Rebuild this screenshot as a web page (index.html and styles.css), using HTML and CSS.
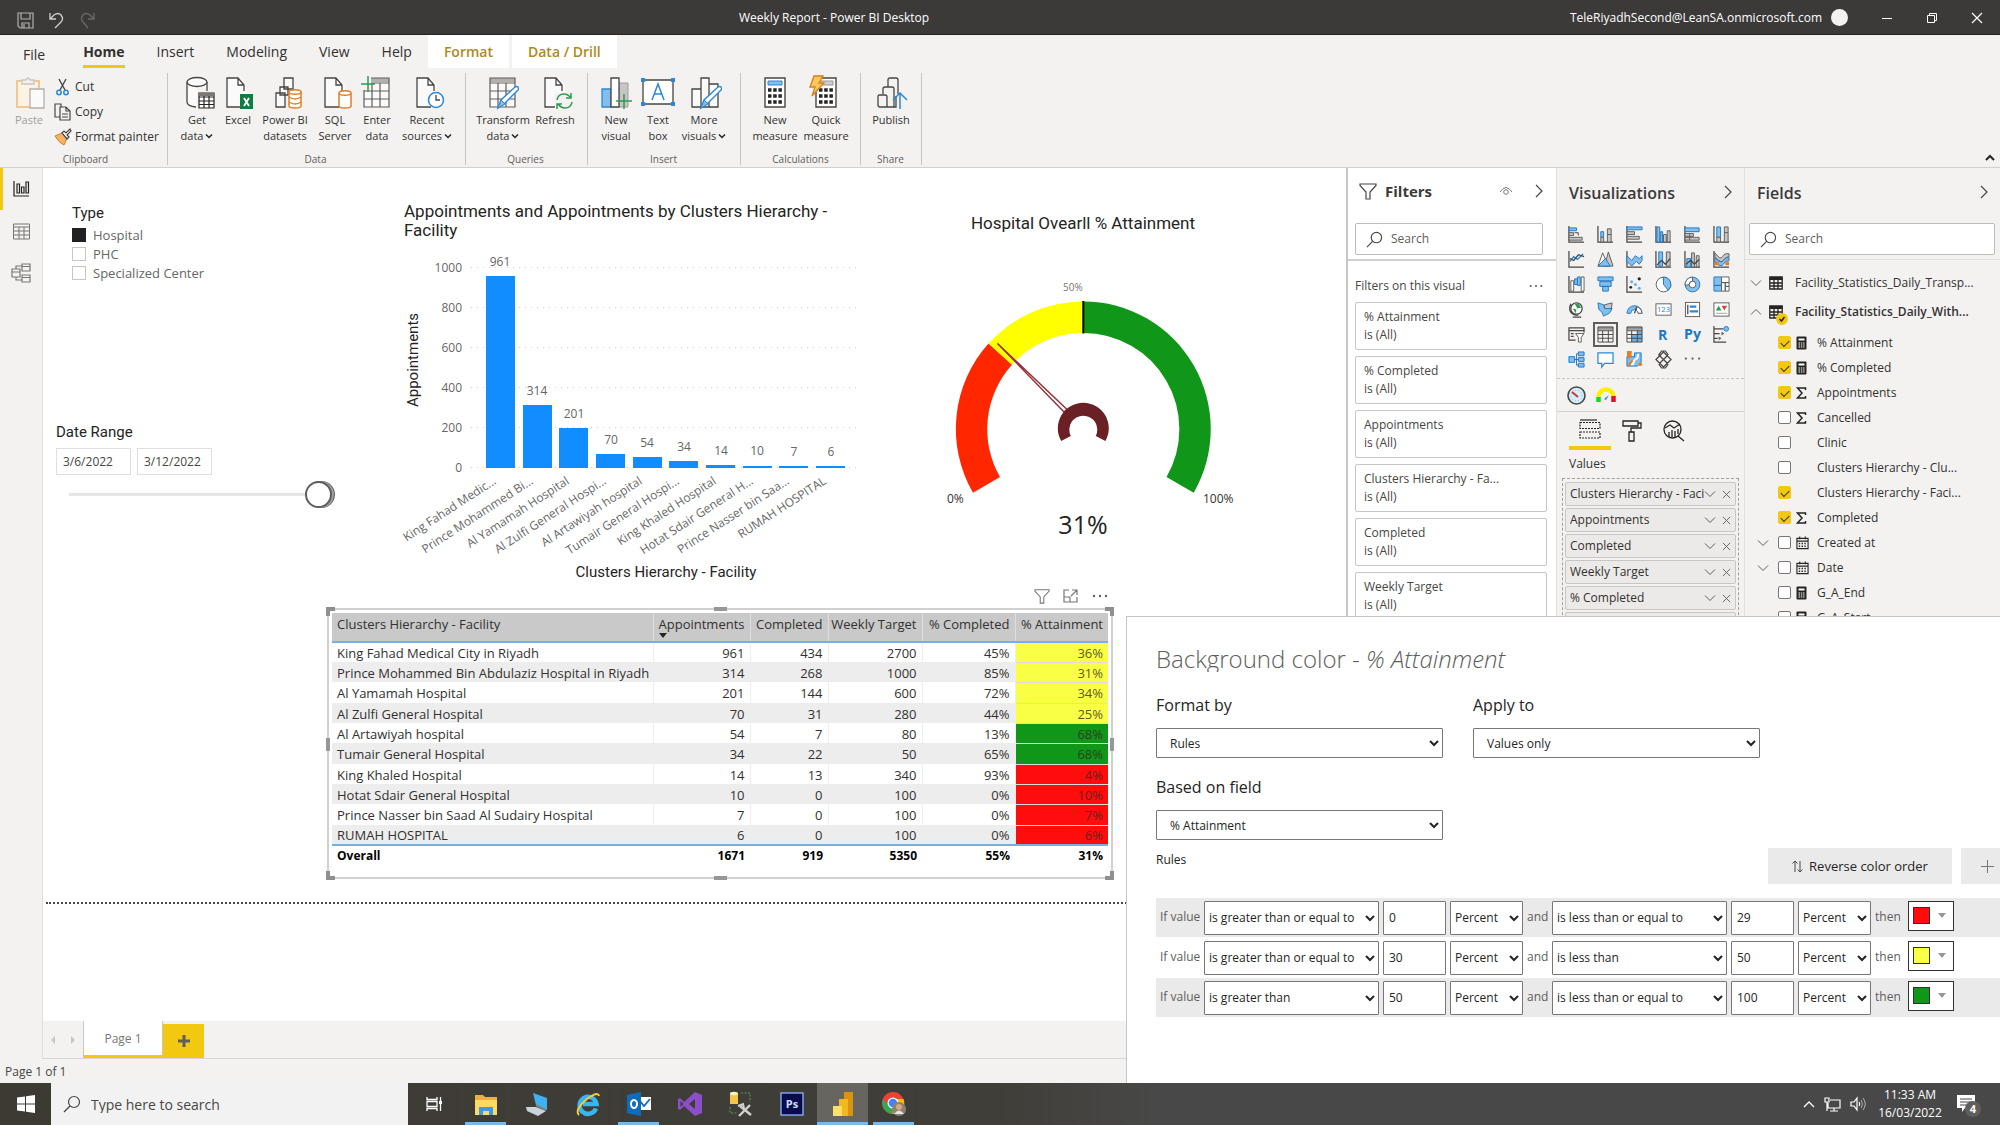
FILE: index.html
```html
<!DOCTYPE html>
<html lang="en">
<head>
<meta charset="utf-8">
<title>Weekly Report - Power BI Desktop</title>
<link rel="stylesheet" href="styles.css">
</head>
<body>
<svg class="sprite" aria-hidden="true">
  <symbol id="chev-down" viewBox="0 0 12 8"><path d="M1 1.500l5 5 5-5" fill="none" stroke="#605e5c"/></symbol>
  <symbol id="chev-up" viewBox="0 0 12 8"><path d="M1 6.500l5-5 5 5" fill="none" stroke="#605e5c"/></symbol>
  <symbol id="chev-right" viewBox="0 0 8 14"><path d="M1 1l6 6-6 6" fill="none" stroke="#484644" stroke-width="1.200"/></symbol>
  <symbol id="caret" viewBox="0 0 8 6"><path d="M1 1.500l3 3 3-3" fill="none" stroke="#252423" stroke-width="1.500"/></symbol>
  <symbol id="cross" viewBox="0 0 10 10"><path d="M1 1l8 8M9 1l-8 8" fill="none" stroke="#605e5c"/></symbol>
  <symbol id="search" viewBox="0 0 18 18"><circle cx="11" cy="7" r="5.500" fill="none" stroke="#484644" stroke-width="1.200"/><path d="M7 11l-6 6" stroke="#484644" stroke-width="1.200"/></symbol>
  <symbol id="funnel" viewBox="0 0 18 18"><path d="M1 2h16v1.500l-6 6.500v7H7v-7L1 3.500z" fill="none" stroke="currentColor" stroke-width="1.200"/></symbol>
  <symbol id="dots" viewBox="0 0 16 4"><g fill="#605e5c"><circle cx="2" cy="2" r="1.200"/><circle cx="8" cy="2" r="1.200"/><circle cx="14" cy="2" r="1.200"/></g></symbol>
  <symbol id="calc" viewBox="0 0 11 14"><rect x=".5" y=".5" width="10" height="13" rx="1" fill="#252423"/><path d="M2.500 3.500h6" stroke="#fff" stroke-width="2"/><path d="M2.500 7h6M2.500 9h6M2.500 11h6" stroke="#fff" stroke-dasharray="1.500 .8"/></symbol>
  <symbol id="sigma" viewBox="0 0 11 14"><path d="M9.500 4V2h-8l4.500 5-4.500 5h8v-2" fill="none" stroke="#252423" stroke-width="1.500"/></symbol>
  <symbol id="cal" viewBox="0 0 14 14"><path d="M1 2h12v11H1zM1 5h12M4 0v3M10 0v3" fill="none" stroke="#252423" stroke-width="1.200"/><path d="M3 7.500h8M3 10.500h8" stroke="#252423" stroke-width="1.500" stroke-dasharray="1.500 1.500"/></symbol>
  <symbol id="tbl" viewBox="0 0 14 14"><path d="M.8 1h12.400v12H.8zM1 7h12M1 10h12M5 4v9M9 4v9" fill="none" stroke="#252423" stroke-width="1.300"/><path d="M.5 1h13v3H.5z" fill="#252423"/></symbol>
  <symbol id="doc" viewBox="0 0 32 34"><path d="M4 2h14l6 7v22H4z" fill="#fafafa"/><path d="M18 31H4V2h11l6 7v6M15 2v7h6" fill="none" stroke="#484644" stroke-width="1.300"/></symbol>
  <symbol id="grid-ico" viewBox="0 0 32 34"><path d="M3 2h25v29H3z" fill="#fafafa"/><path d="M3 2h25v4H3z" fill="#b3b0ad"/><path d="M3 2h25v29H3zM3 7h25M3 15h25M3 23h25M11 7v24M19 7v24" fill="none" stroke="#605e5c" stroke-width="1.200"/></symbol>
  <symbol id="pencil" viewBox="0 0 32 34"><path d="M11 32l3-8 14-13q2-1 3 0 1 2 0 3L17 28z" fill="#fff" stroke="#2b88d8" stroke-width="1.400"/><path d="M11 32l3-8 4 4z" fill="#83beec" stroke="#2b88d8"/></symbol>
</svg>

<header class="titlebar">
  <div class="quick">
    <button aria-label="Save"><svg width="17" height="17" viewBox="0 0 17 17"><path d="M1 1h15v15H3l-2-2zM4 1v6h9V1M5 16v-5h7v5M7 12v4" fill="none" stroke="#b3b0ad" stroke-width="1.200"/></svg></button>
    <button aria-label="Undo"><svg width="17" height="17" viewBox="0 0 17 17"><path d="M2 1v6h6M2 7l4-4q4-3 7 0 3 4 0 7l-6 6" fill="none" stroke="#d2d0ce" stroke-width="1.300"/></svg></button>
    <button aria-label="Redo"><svg width="17" height="17" viewBox="0 0 17 17"><path d="M15 1v6H9M15 7l-4-4Q7 0 4 3q-3 4 0 7l5 6" fill="none" stroke="#6b6967" stroke-width="1.300"/></svg></button>
  </div>
  <h1 class="app-title">Weekly Report - Power BI Desktop</h1>
  <div class="account">
    <span>TeleRiyadhSecond@LeanSA.onmicrosoft.com</span><span class="avatar"></span>
    <button aria-label="Minimize"><svg width="12" height="12"><path d="M1 6.500h10" stroke="#fff"/></svg></button>
    <button aria-label="Restore"><svg width="12" height="12" viewBox="0 0 12 12"><path d="M1.500 3.500h7v7h-7zM3.500 3.500v-2h7v7h-2" fill="none" stroke="#fff"/></svg></button>
    <button aria-label="Close"><svg width="12" height="12"><path d="M1 1l10 10M11 1L1 11" stroke="#fff" stroke-width="1.200"/></svg></button>
  </div>
</header>

<nav class="tabs">
  <a class="tab file" href="#">File</a><a class="tab active" href="#">Home</a><a class="tab" href="#">Insert</a><a class="tab" href="#">Modeling</a><a class="tab" href="#">View</a><a class="tab" href="#">Help</a><a class="tab context" href="#">Format</a><a class="tab context" href="#">Data / Drill</a>
</nav>

<section class="ribbon">
  <div class="group clipboard">
    <div class="tools">
      <button class="tool paste"><svg viewBox="-2 0 32 34"><path d="M2 5h22v26H2z" fill="#fdf3e4" stroke="#f0c894" stroke-width="2"/><path d="M7 8V4h4q2-4 4 0h4v4z" fill="#f3f2f1" stroke="#c8c6c4" stroke-width="1.300"/><path d="M15 13h14v19H15z" fill="#fafafa" stroke="#b3b0ad" stroke-width="1.300"/></svg>Paste</button>
      <div class="small-tools">
        <button><svg viewBox="0 0 18 18"><path d="M5 1l6 11M12 1L6 12" stroke="#484644" stroke-width="1.400"/><g fill="none" stroke="#2b88d8" stroke-width="1.500"><circle cx="5" cy="14.500" r="2.200"/><circle cx="12" cy="14.500" r="2.200"/></g></svg>Cut</button>
        <button><svg viewBox="0 0 18 18"><path d="M6 14H1V1h6v3M6 4h6l4 4v9H6zM12 4v4h4M8 11h6M8 14h6" fill="none" stroke="#484644" stroke-width="1.200"/></svg>Copy</button>
        <button><svg viewBox="0 0 18 18"><path d="M1 8l7-3 5 5-3 7q-5-2-9-9z" fill="#f7b267" stroke="#d67f1c"/><path d="M8 5l2-2 2 2 4-4 1 2-4 4 2 2-2 2z" fill="#fff" stroke="#484644" stroke-width="1.200"/></svg>Format painter</button>
      </div>
    </div>
    <div class="group-name">Clipboard</div>
  </div>
  <div class="group data">
    <div class="tools">
      <button class="tool w44"><svg viewBox="-3 0 32 34"><path d="M3 6v20q0 5 10 5V12h10V6z" fill="#fafafa"/><path d="M3 6v20q0 4 9 5M23 6v9" fill="none" stroke="#484644" stroke-width="1.300"/><ellipse cx="13" cy="6" rx="10" ry="4.500" fill="#fafafa" stroke="#484644" stroke-width="1.300"/><path d="M15 17h15v15H15z" fill="#fff"/><path d="M15 17h15v15H15zM15 21h15M15 25h15M15 28.500h15M20 17v15M25 17v15" fill="none" stroke="#252423" stroke-width="1.200"/><path d="M15 17h15v3H15z" fill="#797775"/></svg>Get<span>data<svg class="caret"><use href="#caret"/></svg></span></button>
      <button class="tool w38"><svg viewBox="-1 0 32 34"><use href="#doc" width="32" height="34"/><path d="M17 18h13v15H17z" fill="#107c41"/><path d="M21 22l5 8M26 22l-5 8" stroke="#fff" stroke-width="1.800"/></svg>Excel</button>
      <button class="tool w56"><svg viewBox="-5 0 32 34"><path d="M10 2h9v11h-9zM6 11h8v8H6zM2 17h9v14H2z" fill="#fafafa" stroke="#484644" stroke-width="1.300"/><path d="M15 16v14q0 2 6 2t6-2V16" fill="#fff" stroke="#e07f26" stroke-width="1.500"/><ellipse cx="21" cy="16" rx="6" ry="2.300" fill="#fff" stroke="#e07f26" stroke-width="1.500"/><path d="M15 21q6 4 12 0M15 26q6 4 12 0" fill="none" stroke="#e07f26" stroke-width="1.500"/></svg>Power BI<span>datasets</span></button>
      <button class="tool w44"><svg viewBox="-2 0 32 34"><use href="#doc" width="32" height="34"/><path d="M18 17v13q0 2 6 2t6-2V17" fill="#fff" stroke="#e07f26" stroke-width="1.500"/><ellipse cx="24" cy="17" rx="6" ry="2.300" fill="#fff" stroke="#e07f26" stroke-width="1.500"/></svg>SQL<span>Server</span></button>
      <button class="tool w40"><svg viewBox="0 0 32 34"><use href="#grid-ico"/><path d="M0 0h10v14H0z" fill="#f3f2f1"/><path d="M7 0v16M0 8h14" stroke="#2d9b4f" stroke-width="1.500"/></svg>Enter<span>data</span></button>
      <button class="tool w60"><svg viewBox="-2 0 32 34"><use href="#doc" width="32" height="34"/><circle cx="23" cy="24" r="7.500" fill="#fff" stroke="#2b88d8" stroke-width="1.500"/><path d="M23 19v5h4" fill="none" stroke="#484644" stroke-width="1.300"/></svg>Recent<span>sources<svg class="caret"><use href="#caret"/></svg></span></button>
    </div>
    <div class="group-name">Data</div>
  </div>
  <div class="group queries">
    <div class="tools">
      <button class="tool w60"><svg viewBox="0 0 32 34"><use href="#grid-ico"/><use href="#pencil"/></svg>Transform<span>data<svg class="caret"><use href="#caret"/></svg></span></button>
      <button class="tool w44"><svg viewBox="-2 0 32 34"><use href="#doc" width="32" height="34"/><path d="M14 17h16v16H14z" fill="#f3f2f1"/><path d="M16 24q1-6 7-6 4 0 7 4M30 17v5h-5M31 26q-1 6-7 6-4 0-7-4M16 33v-5h5" fill="none" stroke="#2d9b4f" stroke-width="1.500"/></svg>Refresh</button>
    </div>
    <div class="group-name">Queries</div>
  </div>
  <div class="group insert">
    <div class="tools">
      <button class="tool w40"><svg viewBox="0 0 32 34"><path d="M2 13h9v18H2z" fill="#83beec" stroke="#2b88d8" stroke-width="1.300"/><path d="M19 7h9v24h-9z" fill="#c8c6c4" stroke="#a19f9d"/><path d="M11 2h8v29h-8z" fill="#fff" stroke="#484644" stroke-width="1.300"/><path d="M24 18v15M16 25h16" stroke="#2d9b4f" stroke-width="1.500"/></svg>New<span>visual</span></button>
      <button class="tool w44"><svg viewBox="0 0 32 34"><path d="M1 4h30v24H1z" fill="#fff" stroke="#484644" stroke-width="1.300"/><path d="M-1 2h4v4h-4zM29 2h4v4h-4zM-1 26h4v4h-4zM29 26h4v4h-4z" fill="#2b88d8"/><path d="M10 24l6-16 6 16M12 18h8" fill="none" stroke="#2b88d8" stroke-width="1.500"/></svg>Text<span>box</span></button>
      <button class="tool w48"><svg viewBox="-2 0 32 34"><path d="M2 13h9v18H2zM19 8h9v23h-9zM11 2h8v29h-8z" fill="#fafafa" stroke="#484644" stroke-width="1.300"/><use href="#pencil" width="32" height="34"/></svg>More<span>visuals<svg class="caret"><use href="#caret"/></svg></span></button>
    </div>
    <div class="group-name">Insert</div>
  </div>
  <div class="group calcs">
    <div class="tools">
      <button class="tool w50"><svg viewBox="0 0 32 34"><path d="M6 2h20v29H6z" fill="#fff" stroke="#484644" stroke-width="1.400"/><path d="M9 5h14v4H9z" fill="#83beec" stroke="#2b88d8"/><path d="M9 14h14M9 20h14M9 26h14" stroke="#252423" stroke-width="3.500" stroke-dasharray="3.500 1.700"/></svg>New<span>measure</span></button>
      <button class="tool w52"><svg viewBox="0 0 32 34"><path d="M6 2h20v29H6z" fill="#fff" stroke="#484644" stroke-width="1.400"/><path d="M9 5h14v4H9z" fill="#d2d0ce" stroke="#979593"/><path d="M9 14h14M9 20h14M9 26h14" stroke="#252423" stroke-width="3.500" stroke-dasharray="3.500 1.700"/><path d="M4 0h9L9 7h5L2 20l3-9H0z" fill="#ffc65c" stroke="#d67f1c" stroke-width="1.300"/></svg>Quick<span>measure</span></button>
    </div>
    <div class="group-name">Calculations</div>
  </div>
  <div class="group share">
    <div class="tools">
      <button class="tool w44"><svg viewBox="0 0 32 34"><path d="M13 11V4q0-2 2-2h6q2 0 2 2v14M8 18v-5q0-2 2-2h7q2 0 2 2v18M4 19h6q2 0 2 2v10H5q-2 0-2-2v-8q0-2 1-2M12 31h9V20" fill="none" stroke="#484644" stroke-width="1.300"/><path d="M25 33V18M18 24l7-7 7 7" fill="none" stroke="#2b88d8" stroke-width="1.500"/></svg>Publish</button>
    </div>
    <div class="group-name">Share</div>
  </div>
  <button class="collapse" aria-label="Collapse ribbon"><svg width="10" height="8" viewBox="0 0 10 8"><path d="M1 6l4-4 4 4" fill="none" stroke="#252423" stroke-width="2"/></svg></button>
</section>

<main class="workspace">
  <nav class="rail">
    <button class="on" aria-label="Report view"><svg width="17" height="16" viewBox="0 0 17 16"><path d="M1 0v15h15M4 3h2.500v9H4zM8.500 6H11v6H8.500zM13 1h2.500v11H13z" fill="none" stroke="#252423" stroke-width="1.200"/></svg></button>
    <button aria-label="Data view"><svg width="17" height="17" viewBox="0 0 17 17"><path d="M.5 1h16v15H.5zM.5 4h16M.5 8h16M.5 12h16M6 4v12M11 4v12" fill="none" stroke="#797775"/></svg></button>
    <button aria-label="Model view"><svg width="20" height="20" viewBox="0 0 20 20"><path d="M1 6h8v8H1zM1 9h8M11 1h8v7h-8zM11 3.500h8M11 12h8v7h-8zM11 14.500h8M5 6V3h6M5 14v3h6" fill="none" stroke="#797775" stroke-width="1.200"/></svg></button>
  </nav>

  <div class="report">
    <div class="canvas">
      <aside class="slicers">
        <fieldset class="slicer">
          <legend>Type</legend>
          <label><input type="checkbox" checked>Hospital</label>
          <label><input type="checkbox">PHC</label>
          <label><input type="checkbox">Specialized Center</label>
        </fieldset>
        <fieldset class="dates">
          <legend>Date Range</legend>
          <div class="date-row"><input type="text" value="3/6/2022" aria-label="From"><input type="text" value="3/12/2022" aria-label="To"></div>
          <input class="slider" type="range" min="0" max="100" value="100" aria-label="Date range">
        </fieldset>
      </aside>

      <figure class="chart">
        <figcaption>Appointments and Appointments by Clusters Hierarchy - Facility</figcaption>
        <svg width="475" height="342" viewBox="395 243 475 342">
          <g stroke="#d2d0ce" stroke-dasharray="1 5"><path d="M471 267.500h388M471 307.500h388M471 347.500h388M471 387.500h388M471 427.500h388M471 467.500h388"/></g>
          <g class="axis end"><text x="462" y="272">1000</text><text x="462" y="312">800</text><text x="462" y="352">600</text><text x="462" y="392">400</text><text x="462" y="432">200</text><text x="462" y="472">0</text></g>
          <g fill="#118dff"><rect x="486" y="276" width="29" height="192"/><rect x="523" y="405" width="29" height="63"/><rect x="559" y="428" width="29" height="40"/><rect x="596" y="454" width="29" height="14"/><rect x="633" y="457" width="29" height="11"/><rect x="669" y="461" width="29" height="7"/><rect x="706" y="465" width="29" height="3"/><rect x="743" y="466" width="29" height="2"/><rect x="779" y="466" width="29" height="2"/><rect x="816" y="466" width="29" height="2"/></g>
          <g class="axis mid"><text x="500" y="266">961</text><text x="537" y="395">314</text><text x="574" y="418">201</text><text x="611" y="444">70</text><text x="647" y="447">54</text><text x="684" y="451">34</text><text x="721" y="455">14</text><text x="757" y="455">10</text><text x="794" y="456">7</text><text x="831" y="456">6</text></g>
          <g class="axis end cat">
            <text transform="translate(497 483) rotate(-33)">King Fahad Medic...</text>
            <text transform="translate(534 483) rotate(-33)">Prince Mohammed Bi...</text>
            <text transform="translate(570 483) rotate(-33)">Al Yamamah Hospital</text>
            <text transform="translate(607 483) rotate(-33)">Al Zulfi General Hospi...</text>
            <text transform="translate(643 483) rotate(-33)">Al Artawiyah hospital</text>
            <text transform="translate(680 483) rotate(-33)">Tumair General Hospi...</text>
            <text transform="translate(717 483) rotate(-33)">King Khaled Hospital</text>
            <text transform="translate(754 483) rotate(-33)">Hotat Sdair General H...</text>
            <text transform="translate(790 483) rotate(-33)">Prince Nasser bin Saa...</text>
            <text transform="translate(827 483) rotate(-33)">RUMAH HOSPITAL</text>
          </g>
          <g class="axis-title"><text x="666" y="577">Clusters Hierarchy - Facility</text><text transform="translate(418 360) rotate(-90)">Appointments</text></g>
        </svg>
      </figure>

      <figure class="gauge">
        <figcaption>Hospital Ovearll % Attainment</figcaption>
        <svg width="320" height="280" viewBox="923 270 320 280">
          <path d="M973 492.700A127.500 127.500 0 0 1 988.500 343.600L1012 364.800A96 96 0 0 0 1000 477z" fill="#ff2600"/>
          <path d="M988.500 343.600A127.500 127.500 0 0 1 1083.300 301.500V333A96 96 0 0 0 1012 364.800z" fill="#ff0"/>
          <path d="M1083.300 301.500A127.500 127.500 0 0 1 1193.700 492.700L1166.500 477A96 96 0 0 0 1083.300 333z" fill="#109618"/>
          <path d="M1083.300 301v32.500" stroke="#000" stroke-width="2"/>
          <path d="M1064 412L997.500 343.500 1067 409.500z" fill="#fff" stroke="#95303a" stroke-width="1.400"/>
          <path d="M1061.200 441A25.500 25.500 0 1 1 1105.400 441L1095.800 436A14 14 0 1 0 1070.800 436z" fill="#6b2026"/>
          <g class="gauge-text"><text class="tick" x="1063" y="291">50%</text><text x="947" y="503">0%</text><text x="1203" y="503">100%</text><text class="value" x="1083" y="534">31%</text></g>
        </svg>
      </figure>

      <section class="table-visual">
        <div class="visual-tools">
          <button aria-label="Filter"><svg width="16" height="16"><use href="#funnel"/></svg></button>
          <button aria-label="Focus mode"><svg width="16" height="16" viewBox="0 0 16 16"><path d="M6 2H1v12h13V9M1 9h6v5M9 2h5v5M14 2L8 8" fill="none" stroke="currentColor" stroke-width="1.200"/></svg></button>
          <button aria-label="More options"><svg width="16" height="4"><use href="#dots"/></svg></button>
        </div>
        <div class="frame">
          <table>
            <colgroup><col class="c-name"><col class="c-app"><col class="c-comp"><col class="c-week"><col class="c-pct"><col></colgroup>
            <thead><tr><th>Clusters Hierarchy - Facility</th><th class="sorted">Appointments</th><th>Completed</th><th>Weekly Target</th><th>% Completed</th><th>% Attainment</th></tr></thead>
            <tbody>
              <tr><td>King Fahad Medical City in Riyadh</td><td>961</td><td>434</td><td>2700</td><td>45%</td><td class="y">36%</td></tr>
              <tr><td>Prince Mohammed Bin Abdulaziz Hospital in Riyadh</td><td>314</td><td>268</td><td>1000</td><td>85%</td><td class="y">31%</td></tr>
              <tr><td>Al Yamamah Hospital</td><td>201</td><td>144</td><td>600</td><td>72%</td><td class="y">34%</td></tr>
              <tr><td>Al Zulfi General Hospital</td><td>70</td><td>31</td><td>280</td><td>44%</td><td class="y">25%</td></tr>
              <tr><td>Al Artawiyah hospital</td><td>54</td><td>7</td><td>80</td><td>13%</td><td class="g">68%</td></tr>
              <tr><td>Tumair General Hospital</td><td>34</td><td>22</td><td>50</td><td>65%</td><td class="g">68%</td></tr>
              <tr><td>King Khaled Hospital</td><td>14</td><td>13</td><td>340</td><td>93%</td><td class="r">4%</td></tr>
              <tr><td>Hotat Sdair General Hospital</td><td>10</td><td>0</td><td>100</td><td>0%</td><td class="r">10%</td></tr>
              <tr><td>Prince Nasser bin Saad Al Sudairy Hospital</td><td>7</td><td>0</td><td>100</td><td>0%</td><td class="r">7%</td></tr>
              <tr><td>RUMAH HOSPITAL</td><td>6</td><td>0</td><td>100</td><td>0%</td><td class="r">6%</td></tr>
            </tbody>
            <tfoot><tr><td>Overall</td><td>1671</td><td>919</td><td>5350</td><td>55%</td><td>31%</td></tr></tfoot>
          </table>
          <i class="corner tl"></i><i class="corner tr"></i><i class="corner bl"></i><i class="corner br"></i>
          <i class="grip top"></i><i class="grip bottom"></i><i class="grip left"></i><i class="grip right"></i>
        </div>
      </section>
      <div class="page-edge"></div>
    </div>
    <div class="pages">
      <button class="arrow" aria-label="Previous page"><svg width="6" height="10"><path d="M5 1v8L1 5z" fill="#c8c6c4"/></svg></button>
      <button class="arrow" aria-label="Next page"><svg width="6" height="10"><path d="M1 1v8l4-4z" fill="#c8c6c4"/></svg></button>
      <button class="page">Page 1</button>
      <button class="add" aria-label="New page"><svg width="12" height="12"><path d="M6 0v12M0 6h12" stroke="#605e5c" stroke-width="3"/></svg></button>
    </div>
  </div>

  <section class="pane filters">
    <div class="pane-head"><svg width="18" height="18"><use href="#funnel"/></svg><h2>Filters</h2><svg class="eye" width="14" height="10" viewBox="0 0 14 10"><path d="M1 6q6-9 12 0" fill="none" stroke="#797775"/><circle cx="7" cy="6" r="2.300" fill="none" stroke="#797775"/></svg><svg width="8" height="14"><use href="#chev-right"/></svg></div>
    <label class="search"><svg width="17" height="17"><use href="#search"/></svg><input type="text" placeholder="Search" aria-label="Search filters"></label>
    <div class="filter-title">Filters on this visual<svg width="14" height="4"><use href="#dots"/></svg></div>
    <ul class="cards">
      <li>% Attainment<span>is (All)</span></li>
      <li>% Completed<span>is (All)</span></li>
      <li>Appointments<span>is (All)</span></li>
      <li>Clusters Hierarchy - Fa...<span>is (All)</span></li>
      <li>Completed<span>is (All)</span></li>
      <li>Weekly Target<span>is (All)</span></li>
    </ul>
  </section>

  <section class="pane viz">
    <div class="pane-head"><h2>Visualizations</h2><svg width="8" height="14"><use href="#chev-right"/></svg></div>
    <div class="viz-grid">
      <svg viewBox="0 0 18 18"><path d="M1 0v17h16" class="k"/><path d="M1 2h8v3H1z" class="b"/><path d="M1 7h5v3H1zM1 12h14v3H1zM7 7h4v3" class="g"/></svg>
      <svg viewBox="0 0 18 18"><path d="M1 0v17h16" class="k"/><path d="M4 6h3v6H4z" class="b"/><path d="M4 12h3v5H4zM11 3h4v14h-4zM11 9h4" class="g"/></svg>
      <svg viewBox="0 0 18 18"><path d="M1 0v17h16" class="k"/><path d="M1 1h16v3H1z" class="b"/><path d="M1 6h8v3H1zM1 11h13v3H1z" class="g"/></svg>
      <svg viewBox="0 0 18 18"><path d="M1 0v17h16" class="k"/><path d="M2 1h3v16H2zM6 6h2v11H6z" class="b"/><path d="M9 9h3v8H9zM13 5h3v12h-3z" class="g"/></svg>
      <svg viewBox="0 0 18 18"><path d="M1 0v17h16" class="k"/><path d="M1 2h15v4H1z" class="b"/><path d="M1 8h9v3H1zM1 12h15v3H1zM6 8v7" class="g"/></svg>
      <svg viewBox="0 0 18 18"><path d="M1 0v17h16" class="k"/><path d="M4 1h4v11H4z" class="b"/><path d="M4 12h4v5H4zM12 1h4v16h-4zM12 7h4" class="g"/></svg>

      <svg viewBox="0 0 18 18"><path d="M1 0v17h16" class="k"/><path d="M2 11l4-5 4 3 6-6" class="bl"/><path d="M2 8l4 2 5-6 6 2" class="k"/></svg>
      <svg viewBox="0 0 18 18"><path d="M8 16L12 1l5 15z" class="g"/><path d="M1 16L6 2l6 14z" class="w"/><path d="M1 16l8-8 5 8z" class="b"/></svg>
      <svg viewBox="0 0 18 18"><path d="M1 0v17h16" class="k"/><path d="M1 5l5 5 4-5 4 3 3-3v5l-3 4-3-3-5 5-5-5z" class="b"/></svg>
      <svg viewBox="0 0 18 18"><path d="M1 0v17h16" class="k"/><path d="M4 1h4v15H4z" class="b"/><path d="M12 1h4v15h-4z" class="g"/><path d="M2 15l5-5 4 4 5-6" class="k"/></svg>
      <svg viewBox="0 0 18 18"><path d="M1 0v17h16" class="k"/><path d="M3 8h4v9H3z" class="b"/><path d="M8 2h3v15H8zM13 5h3v12h-3z" class="g"/><path d="M2 14l5-4 4 4 5-5" class="k"/></svg>
      <svg viewBox="0 0 18 18"><path d="M1 0v17h16" class="k"/><path d="M2 2q6 8 8 4t7-3v3q-4 0-6 4T2 6z" class="g"/><path d="M2 7q6 7 9 3t6-3v3q-4 0-6 4T2 12z" class="b"/><path d="M2 11h4v4H2zM13 11h4v4h-4z" fill="#e07f26"/></svg>

      <svg viewBox="0 0 18 18"><path d="M1 0v17h16" class="k"/><path d="M3 5h3v11H3zM14 1h3v15h-3z" class="w"/><path d="M7 3h3v6H7z" class="b"/><path d="M10 1h3v9h-3z" class="b"/></svg>
      <svg viewBox="0 0 18 18"><path d="M1 1h16v4H1zM3 6h12v5H3zM6 11h6v5H6z" class="b"/></svg>
      <svg viewBox="0 0 18 18"><path d="M1 0v17h16" class="k"/><g fill="#69afe5"><circle cx="6" cy="6" r="1.600"/><circle cx="10" cy="9" r="1.600"/><circle cx="14" cy="13" r="1.600"/></g><g fill="#252423"><circle cx="14" cy="3" r="1.700"/><circle cx="5" cy="12" r="1.500"/></g></svg>
      <svg viewBox="0 0 18 18"><circle cx="9" cy="9" r="7.800" class="w"/><path d="M9 1.200A7.800 7.800 0 0 1 14 15L9 9z" class="b"/></svg>
      <svg viewBox="0 0 18 18"><circle cx="9" cy="9" r="7.800" class="b"/><circle cx="9" cy="9" r="3.500" class="w"/><path d="M9 1.200A7.800 7.800 0 0 0 1.200 10l4.300-1q0-3.500 3.500-3.500z" class="w"/></svg>
      <svg viewBox="0 0 18 18"><path d="M1 1h8v9H1zM1 10h8v6H1z" class="b"/><path d="M9 1h8v6H9zM9 7h4v9H9zM13 7h4v4h-4zM13 11h4v5h-4z" class="w"/></svg>

      <svg viewBox="0 0 18 18"><circle cx="9" cy="8" r="6" fill="#fff" stroke="#484644" stroke-width="1.300"/><path d="M7 3l4 0 3 4-4 1zM5 8l4 1-1 4z" fill="#2d9b4f"/><path d="M3 3q-4 9 5 12h3M5 17h9" class="k"/></svg>
      <svg viewBox="0 0 18 18"><path d="M8 4l8-2-1 8H8z" class="g"/><path d="M1 2l6 2 1 4h8l-3 5-6 3q-1-5-5-7z" class="b"/></svg>
      <svg viewBox="0 0 18 18"><path d="M1 13a8 8 0 0 1 16 0h-4a4 4 0 0 0-8 0z" class="b"/><path d="M11 6a8 8 0 0 1 6 7h-4a4 4 0 0 0-2-3z" class="w"/><path d="M9 13l2-6" class="k"/></svg>
      <svg viewBox="0 0 18 18"><rect x="1" y="3" width="16" height="12" class="w"/><text x="9" y="12" class="num">123</text></svg>
      <svg viewBox="0 0 18 18"><rect x="1.500" y="1.500" width="15" height="15" class="w"/><path d="M4 4v10" class="k"/><path d="M6 6h7M6 11h9" stroke="#2b88d8" stroke-width="2.500"/></svg>
      <svg viewBox="0 0 18 18"><rect x="1" y="2" width="16" height="14" class="w"/><path d="M3 10l3-5 3 5z" fill="#2d9b4f"/><path d="M9 5h6l-3 5z" fill="#d64545"/><path d="M3 13h12" stroke="#a19f9d"/></svg>

      <svg viewBox="0 0 18 18"><path d="M8 15H1V2h16v5M1 5h16M3 8h3M3 11h3" class="k"/><path d="M8 8h9l-3 4v5h-3v-5z" class="w"/></svg>
      <svg class="picked" viewBox="0 0 18 18"><path d="M1 1h16v3H1z" fill="#979593"/><path d="M1 1h16v16H1zM1 5h16M1 9h16M1 13h16M6 5v12M12 5v12" class="k1"/></svg>
      <svg viewBox="0 0 18 18"><path d="M1 1h16v3H1z" fill="#979593"/><path d="M12 5h5v12h-5zM6 9h6v8H6z" fill="#69afe5"/><path d="M1 1h16v16H1zM1 5h16M1 9h16M1 13h16M6 5v12M12 5v12" class="k1"/></svg>
      <svg viewBox="0 0 18 18"><text x="8" y="15" class="letter">R</text></svg>
      <svg viewBox="0 0 18 18"><text x="9" y="14" class="letter">Py</text></svg>
      <svg viewBox="0 0 18 18"><path d="M1 0v17h13M1 3h10M1 8h6M1 13h4" class="k"/><circle cx="14" cy="3" r="2.500" class="b"/><path d="M9 6l3 2-3 2zM6 11l3 2-3 2z" fill="#605e5c"/></svg>

      <svg viewBox="0 0 18 18"><path d="M1 6h6v6H1zM11 1h6v4h-6zM11 7h6v4h-6zM11 13h6v4h-6zM7 9h4M9 3v12M9 3h2M9 15h2" class="b"/></svg>
      <svg viewBox="0 0 18 18"><path d="M1 2h16v11H8l-3 4v-4H1z" fill="#fff" stroke="#2b88d8" stroke-width="1.300"/></svg>
      <svg viewBox="0 0 18 18"><path d="M1 6h8V2h7v10l-4 4H1z" class="b"/><path d="M12 3h2l-1 5-3 2-2 5H5l2-5 4-3z" fill="#fff"/><path d="M1 0h5v5l-2.500 4L1 5z" fill="#e07f26"/><circle cx="15" cy="14" r="2" fill="#e07f26"/><path d="M2 16l5-6" stroke="#e07f26" stroke-width="2"/></svg>
      <svg viewBox="0 0 18 18"><path d="M9 1l4 4-4 4-4-4zM5 5l4 4-4 4-4-4zM13 5l4 4-4 4-4-4zM9 9l4 4-4 4-4-4zM5 5L4 4 7 0h4l3 4M4 14l3 4h4l3-4" class="k"/></svg>
      <svg viewBox="0 0 18 18"><g fill="#605e5c"><circle cx="2" cy="8" r="1.200"/><circle cx="9" cy="8" r="1.200"/><circle cx="16" cy="8" r="1.200"/></g></svg>
    </div>
    <div class="custom-viz">
      <svg width="19" height="19" viewBox="0 0 19 19"><circle cx="9.500" cy="9.500" r="8.500" fill="#d5effb" stroke="#484644" stroke-width="1.600"/><circle cx="9.500" cy="9.500" r="5.500" fill="none" stroke="#7cb4d4" stroke-dasharray="1 2"/><path d="M5 6l6 5" stroke="#d13438" stroke-width="2"/></svg>
      <svg width="20" height="16" viewBox="0 0 20 16"><path d="M2.500 15V10" stroke="#1bd52b" stroke-width="4.500"/><path d="M2.500 10a7.500 7.500 0 0 1 15 0" fill="none" stroke="#ffee00" stroke-width="4.500"/><path d="M17.500 9v6" stroke="#e81123" stroke-width="4.500"/><path d="M8 12l5-4-3 5z" fill="#2b88d8"/></svg>
    </div>
    <div class="viz-tabs">
      <button class="on" aria-label="Fields"><svg width="22" height="20" viewBox="0 0 22 20"><path d="M1 1h17" stroke="#252423" stroke-width="1.200"/><path d="M1 3.500h20v6H1zM1 13h20v6H1z" fill="none" stroke="#252423" stroke-width="1.200" stroke-dasharray="2 1"/></svg></button>
      <button aria-label="Format"><svg width="20" height="22" viewBox="0 0 20 22"><path d="M1 1h15v5H1zM16 3h3v5H9v4M7 12h5v9H7z" fill="none" stroke="#252423" stroke-width="1.300"/></svg></button>
      <button aria-label="Analytics"><svg width="22" height="22" viewBox="0 0 22 22"><circle cx="9.500" cy="9.500" r="8.500" fill="none" stroke="#252423" stroke-width="1.300"/><path d="M15 16l6 5M2 8l5-3 4 3 6-4M6 17v-5M9 17v-7M12 17v-6M15 14v-5" fill="none" stroke="#252423" stroke-width="1.300"/></svg></button>
    </div>
    <h3>Values</h3>
    <ul class="wells">
      <li><span>Clusters Hierarchy - Faci</span><svg width="12" height="8"><use href="#chev-down"/></svg><svg width="9" height="9"><use href="#cross"/></svg></li>
      <li><span>Appointments</span><svg width="12" height="8"><use href="#chev-down"/></svg><svg width="9" height="9"><use href="#cross"/></svg></li>
      <li><span>Completed</span><svg width="12" height="8"><use href="#chev-down"/></svg><svg width="9" height="9"><use href="#cross"/></svg></li>
      <li><span>Weekly Target</span><svg width="12" height="8"><use href="#chev-down"/></svg><svg width="9" height="9"><use href="#cross"/></svg></li>
      <li><span>% Completed</span><svg width="12" height="8"><use href="#chev-down"/></svg><svg width="9" height="9"><use href="#cross"/></svg></li>
      <li></li>
    </ul>
  </section>

  <section class="pane fields">
    <div class="pane-head"><h2>Fields</h2><svg width="8" height="14"><use href="#chev-right"/></svg></div>
    <label class="search"><svg width="17" height="17"><use href="#search"/></svg><input type="text" placeholder="Search" aria-label="Search fields"></label>
    <div class="tables">
      <div class="tbl-row"><svg width="12" height="8"><use href="#chev-down"/></svg><span class="tbl-ico"><svg width="14" height="14"><use href="#tbl"/></svg></span>Facility_Statistics_Daily_Transp...</div>
      <div class="tbl-row open"><svg width="12" height="8"><use href="#chev-up"/></svg><span class="tbl-ico"><svg width="14" height="14"><use href="#tbl"/></svg><svg class="badge" viewBox="0 0 12 12"><circle cx="6" cy="6" r="6" fill="#f2c811"/><path d="M3.500 6l2 2 3-4" fill="none" stroke="#252423" stroke-width="1.500"/></svg></span>Facility_Statistics_Daily_With...</div>
      <ul class="field-list">
        <li><i></i><input id="f1" type="checkbox" checked><svg width="11" height="14"><use href="#calc"/></svg><label for="f1">% Attainment</label></li>
        <li><i></i><input id="f2" type="checkbox" checked><svg width="11" height="14"><use href="#calc"/></svg><label for="f2">% Completed</label></li>
        <li><i></i><input id="f3" type="checkbox" checked><svg width="11" height="14"><use href="#sigma"/></svg><label for="f3">Appointments</label></li>
        <li><i></i><input id="f4" type="checkbox"><svg width="11" height="14"><use href="#sigma"/></svg><label for="f4">Cancelled</label></li>
        <li><i></i><input id="f5" type="checkbox"><i></i><label for="f5">Clinic</label></li>
        <li><i></i><input id="f6" type="checkbox"><i></i><label for="f6">Clusters Hierarchy - Clu...</label></li>
        <li><i></i><input id="f7" type="checkbox" checked><i></i><label for="f7">Clusters Hierarchy - Faci...</label></li>
        <li><i></i><input id="f8" type="checkbox" checked><svg width="11" height="14"><use href="#sigma"/></svg><label for="f8">Completed</label></li>
        <li><svg width="12" height="8"><use href="#chev-down"/></svg><input id="f9" type="checkbox"><svg width="13" height="14"><use href="#cal"/></svg><label for="f9">Created at</label></li>
        <li><svg width="12" height="8"><use href="#chev-down"/></svg><input id="f10" type="checkbox"><svg width="13" height="14"><use href="#cal"/></svg><label for="f10">Date</label></li>
        <li><i></i><input id="f11" type="checkbox"><svg width="11" height="14"><use href="#calc"/></svg><label for="f11">G_A_End</label></li>
        <li><i></i><input id="f12" type="checkbox"><svg width="11" height="14"><use href="#calc"/></svg><label for="f12">G_A_Start</label></li>
      </ul>
    </div>
  </section>

  <section class="dialog" role="dialog" aria-label="Background color">
    <h2>Background color - <em>% Attainment</em></h2>
    <div class="form-grid">
      <div><label for="fmt">Format by</label><select id="fmt"><option>Rules</option></select></div>
      <div><label for="app">Apply to</label><select id="app"><option>Values only</option></select></div>
      <div><label for="bas">Based on field</label><select id="bas"><option>% Attainment</option></select></div>
    </div>
    <div class="rules-head">
      <h3>Rules</h3>
      <button><svg width="11" height="13" viewBox="0 0 11 13"><path d="M3 12V1M.5 3.500L3 1l2.500 2.500M8 1v11M5.500 9.500L8 12l2.500-2.500" fill="none" stroke="#484644"/></svg>Reverse color order</button>
      <button class="new-rule" aria-label="New rule"><svg width="13" height="13"><path d="M6.500 0v13M0 6.500h13" stroke="#797775"/></svg></button>
    </div>
    <div class="rule shaded">
      <span class="if">If value</span><select class="op" aria-label="Operator"><option>is greater than or equal to</option></select><input type="text" value="0" aria-label="Minimum"><select class="unit" aria-label="Unit"><option>Percent</option></select><span>and</span><select class="op" aria-label="Operator"><option>is less than or equal to</option></select><input type="text" value="29" aria-label="Maximum"><select class="unit" aria-label="Unit"><option>Percent</option></select><span>then</span><button class="color" aria-label="Red"><i class="r"></i></button>
    </div>
    <div class="rule">
      <span class="if">If value</span><select class="op" aria-label="Operator"><option>is greater than or equal to</option></select><input type="text" value="30" aria-label="Minimum"><select class="unit" aria-label="Unit"><option>Percent</option></select><span>and</span><select class="op" aria-label="Operator"><option>is less than</option></select><input type="text" value="50" aria-label="Maximum"><select class="unit" aria-label="Unit"><option>Percent</option></select><span>then</span><button class="color" aria-label="Yellow"><i class="y"></i></button>
    </div>
    <div class="rule shaded">
      <span class="if">If value</span><select class="op" aria-label="Operator"><option>is greater than</option></select><input type="text" value="50" aria-label="Minimum"><select class="unit" aria-label="Unit"><option>Percent</option></select><span>and</span><select class="op" aria-label="Operator"><option>is less than or equal to</option></select><input type="text" value="100" aria-label="Maximum"><select class="unit" aria-label="Unit"><option>Percent</option></select><span>then</span><button class="color" aria-label="Green"><i class="g"></i></button>
    </div>
  </section>
</main>
<div class="status">Page 1 of 1</div>

<footer class="taskbar">
  <button class="start" aria-label="Start"><svg width="18" height="18" viewBox="0 0 18 18"><path d="M0 2.500L8 1.500V8.500H0zM9 1.300L18 0v8.500H9zM0 9.500h8v7l-8-1zM9 9.500h9V18l-9-1.300z" fill="#fff"/></svg></button>
  <label class="task-search"><svg width="18" height="18"><use href="#search"/></svg><input type="text" placeholder="Type here to search" aria-label="Type here to search"></label>
  <div class="apps">
    <button aria-label="Task view"><svg viewBox="0 0 26 26"><path d="M5 6v2.500h10V6M5 20v-2.500h10V20M5 10.500h10v5H5zM18.500 6v14" fill="none" stroke="#fff" stroke-width="1.300"/><path d="M17 10h3v3h-3z" fill="#fff"/></svg></button>
    <button class="run" aria-label="File Explorer"><svg viewBox="0 0 26 26"><path d="M2 4h8l2 2h12v18H2z" fill="#e8b33c"/><path d="M2 9h22v15H2z" fill="#ffd968"/><path d="M6 24v-8h14v8h-4v-4h-6v4z" fill="#3f9be0"/></svg></button>
    <button aria-label="Remote Desktop"><svg viewBox="0 0 26 26"><path d="M9 2l14 5v12L12 14z" fill="#3fb1f0"/><path d="M2 16l10 0 10 4-8 5-11-5z" fill="#c9d3da"/><path d="M12 14l10 5" stroke="#7a8790" stroke-width="2"/></svg></button>
    <button aria-label="Internet Explorer"><svg viewBox="0 0 26 26"><path d="M21 17.500a8.500 8.500 0 1 1 .5-4.500H8" fill="none" stroke="#36b7f2" stroke-width="4.500"/><path d="M4 24Q-1 19 12 8 23 0 24 5" fill="none" stroke="#f7c93b" stroke-width="2"/></svg></button>
    <button class="run" aria-label="Outlook"><svg viewBox="0 0 26 26"><path d="M12 6h13v13H12z" fill="#fff"/><path d="M14 10l4 5 6-7" stroke="#0f6cbd" stroke-width="1.800" fill="none"/><path d="M1 4l14-3v24L1 22z" fill="#0f6cbd"/><ellipse cx="8" cy="13" rx="3" ry="4" fill="none" stroke="#fff" stroke-width="2"/></svg></button>
    <button aria-label="Visual Studio"><svg viewBox="0 0 26 26"><path d="M18 1l7 3v18l-7 3L7 15l-4 4-2-1V8l2-1 4 4zM18 8l-6 5 6 5zM3.500 10v6l3-3z" fill="#8a4fc9" fill-rule="evenodd"/></svg></button>
    <button aria-label="SQL Server tools"><svg viewBox="0 0 26 26"><path d="M2 2h8v11H2z" fill="#f5c54b"/><ellipse cx="6" cy="2.500" rx="4" ry="1.800" fill="#fff2c2"/><path d="M13 2h9v9M2 16v6h8" fill="none" stroke="#55a05a" stroke-dasharray="2 1.500"/><path d="M12 15l11 9M22 14L11 25" stroke="#d2d0ce" stroke-width="2.400"/><path d="M10 15l5-2 1 4" fill="none" stroke="#d2d0ce" stroke-width="2"/></svg></button>
    <button aria-label="Photoshop"><svg viewBox="0 0 26 26"><rect x="2" y="2" width="22" height="22" fill="#0b0b4f" stroke="#8fb6ff" stroke-width="1.300"/><text x="13" y="17" class="ps">Ps</text></svg></button>
    <button class="run front" aria-label="Power BI Desktop"><svg viewBox="0 0 26 26"><path d="M14 1h9v24h-9z" fill="#d9940b"/><path d="M9 8h9v17H9z" fill="#f0b921"/><path d="M3 15h9v10H3z" fill="#ffe066"/></svg></button>
    <button class="run" aria-label="Chrome"><svg viewBox="0 0 26 26"><circle cx="12" cy="12" r="11" fill="#ea4335"/><path d="M2 8a11 11 0 0 0 9 15l4-8-8-1z" fill="#34a853"/><path d="M12 8h10.500a11 11 0 0 1-11 15z" fill="#fbbc05"/><circle cx="12" cy="12" r="5.500" fill="#fff"/><circle cx="12" cy="12" r="4.300" fill="#4285f4"/><circle cx="18" cy="18" r="7" fill="#8c8272"/><circle cx="18" cy="16" r="3" fill="#d9a781"/><path d="M13 23q5-7 10 0z" fill="#e6e6e6"/></svg></button>
  </div>
  <div class="tray">
    <svg width="12" height="8" viewBox="0 0 12 8"><path d="M1 7l5-5 5 5" fill="none" stroke="#fff" stroke-width="1.300"/></svg>
    <svg width="17" height="15" viewBox="0 0 17 15"><path d="M6 3h10v8H4V6M1 1h4v4H1zM3 5v9M10 11v3M6 14h8" fill="none" stroke="#fff" stroke-width="1.200"/></svg>
    <svg width="17" height="14" viewBox="0 0 17 14"><path d="M1 5h3l3-4v12L4 9H1zM9 5q1.500 2 0 4" fill="none" stroke="#fff" stroke-width="1.200"/><path d="M11 3q3 4 0 8M13 1q4.500 6 0 12" fill="none" stroke="#b3b0ad"/></svg>
    <div class="clock"><span>11:33 AM</span><span>16/03/2022</span></div>
    <div class="notif"><svg width="18" height="18" viewBox="0 0 18 18"><path d="M0 0h18v13H8l-3 4v-4H0z" fill="#fff"/><path d="M3 4h12M3 7h12M3 10h7" stroke="#484848"/></svg><b>4</b></div>
  </div>
</footer>
</body>
</html>
```
FILE: styles.css
```css
:root {
  --ui: "Open Sans", "Noto Sans", sans-serif;
  --din: Roboto, "Open Sans", sans-serif;
  --chrome: #f3f2f1;
  --line: #d2d0ce;
  --ink: #323130;
  --gold: #f2c811;
}
* { box-sizing: border-box; }
body { margin: 0; min-height: 100vh; display: flex; flex-direction: column; font: 12px/16px var(--ui); color: var(--ink); background: var(--chrome); overflow: hidden; }
button { border: 0; background: none; padding: 0; margin: 0; font: inherit; color: inherit; }
input, select { font: inherit; color: inherit; }
ul { list-style: none; margin: 0; padding: 0; }
h1, h2, h3, figure { margin: 0; }
fieldset { border: 0; margin: 0; padding: 0; }
legend { padding: 0; }
svg { display: block; overflow: visible; flex: none; }
.sprite { display: none; }
.r { background: #ff0d0d; }
.y { background: #f9ff45; }
.g { background: #109618; }

/* title bar */
.titlebar { height: 35px; display: grid; grid-template-columns: 739px auto 1fr; align-items: center; background: #3b3a39; color: #fff; border-bottom: 1px solid #252423; }
.quick { display: flex; gap: 14px; padding: 6px 0 0 17px; }
.app-title { font-size: 12px; font-weight: 400; padding-top: 2px; }
.account { display: flex; justify-content: flex-end; align-items: center; padding: 1px 17px 0 0; }
.avatar { width: 17px; height: 17px; border-radius: 50%; background: var(--chrome); margin-left: 9px; }
.account button { margin-left: 33px; }

/* ribbon tabs */
.tabs { display: flex; height: 33px; padding-left: 7px; font-size: 14px; line-height: 34px; }
.tab { color: var(--ink); text-decoration: none; padding: 0 16px; }
.tab.file { padding-top: 3px; padding-right: 22px; }
.tab.active { font-weight: 700; position: relative; }
.tab.active::after { content: ""; position: absolute; left: 16px; right: 16px; bottom: 0; height: 3px; background: var(--gold); }
.tab.context { color: #b0891a; font-weight: 600; background: #fff; margin-right: 3px; }

/* ribbon */
.ribbon { display: flex; height: 100px; border-bottom: 1px solid var(--line); background: var(--chrome); }
.group { display: flex; flex-direction: column; justify-content: space-between; margin: 5px 0 2px; padding-top: 3px; border-right: 1px solid #c8c6c4; }
.group-name { text-align: center; font-size: 10px; line-height: 12px; color: #605e5c; padding-right: 9px; }
.tools { display: flex; }
.tool { display: flex; flex-direction: column; align-items: center; white-space: nowrap; font-size: 11px; line-height: 16px; }
.tool > svg { width: 32px; height: 34px; margin-bottom: 2px; }
.tool > span { display: flex; align-items: center; }
.caret { width: 8px; height: 6px; margin-left: 2px; }
.paste { color: #a19f9d; width: 32px; }
.clipboard { width: 168px; padding-left: 13px; }
.small-tools { display: flex; flex-direction: column; gap: 9px; padding: 3px 0 0 9px; }
.small-tools button { display: flex; align-items: center; gap: 3px; font-size: 12px; white-space: nowrap; }
.small-tools svg { width: 18px; height: 18px; margin: -1px 0; }
.data { width: 298px; padding-left: 7px; }
.queries { width: 122px; padding-left: 7px; }
.insert { width: 153px; padding-left: 8px; }
.calcs { width: 120px; padding-left: 9px; }
.share { width: 61px; padding-left: 8px; }
.w38 { width: 38px; } .w40 { width: 40px; } .w44 { width: 44px; } .w48 { width: 48px; }
.w50 { width: 50px; } .w52 { width: 52px; } .w56 { width: 56px; } .w60 { width: 60px; }
.collapse { margin: auto 5px 5px auto; }

/* workspace */
.workspace { flex: 1; min-height: 0; display: flex; position: relative; }
.rail { width: 43px; border-right: 1px solid #e1dfdd; }
.rail button { width: 100%; height: 42px; display: grid; place-items: center; }
.rail .on { border-left: 3px solid var(--gold); padding-right: 3px; }
.report { flex: 1; min-width: 0; display: flex; flex-direction: column; background: #fff; }
.canvas { flex: 1; display: grid; grid-template-columns: 284px 543px 1fr; grid-template-rows: 416px 318px 1fr; }
.slicers { padding: 36px 13px 0; color: #666; }
.slicer { padding-left: 16px; font-size: 13px; }
.slicer legend, .dates legend { font: 15px/19px var(--din); color: #252423; margin-bottom: 2px; }
.slicer label { display: flex; align-items: center; gap: 7px; height: 19px; }
.slicer input { appearance: none; width: 14px; height: 14px; margin: 0; border: 1px solid #c8c6c4; background: #fff; }
.slicer input:checked { background: #212121; border-color: #212121; }
.dates { margin-top: 141px; }
.date-row { display: flex; gap: 6px; margin-top: 4px; }
.date-row input { width: 75px; height: 27px; border: 1px solid #e1dfdd; padding: 0 6px; color: #484644; background: #fff; }
.slider { appearance: none; display: block; width: 263px; height: 28px; margin: 5px 0 0 13px; background: linear-gradient(#e6e6e6, #e6e6e6) center/100% 3px no-repeat; }
.slider::-webkit-slider-thumb { appearance: none; width: 27px; height: 27px; border-radius: 50%; border: 2px solid #605e5c; background: #fff; box-shadow: 2px 0 0 #a19f9d, 3px 0 0 #605e5c; }
figcaption { font: 17px/19px var(--din); color: #252423; }
.chart { padding: 34px 0 0 68px; }
.chart figcaption { padding-left: 9px; width: 475px; height: 41px; }
.axis { font: 12px var(--ui); fill: #666; }
.end { text-anchor: end; }
.mid { text-anchor: middle; }
.axis-title { font: 15px var(--din); fill: #252423; text-anchor: middle; }
.gauge { width: 426px; padding-top: 46px; text-align: center; }
.gauge figcaption { height: 56px; }
.gauge svg { margin: 0 auto; }
.gauge-text { font: 12px var(--ui); fill: #323130; }
.tick { font-size: 10px; fill: #797775; }
.value { font-size: 25px; fill: #252423; text-anchor: middle; }

/* table visual */
.table-visual { grid-column: 2 / 4; width: 786px; }
.visual-tools { display: flex; justify-content: flex-end; align-items: center; gap: 13px; height: 24px; padding-right: 5px; color: #797775; }
.frame { position: relative; height: 271px; border: 2px solid #d0d0d0; padding: 3px; }
table { width: 100%; border-collapse: collapse; table-layout: fixed; font-size: 13px; line-height: 16px; }
.c-name { width: 321px; } .c-app { width: 97px; } .c-comp { width: 78px; } .c-week { width: 94px; } .c-pct { width: 93px; }
th { height: 29px; padding: 0 5px 6px 0; background: #c9c9c9; font-weight: 400; text-align: right; white-space: nowrap; border-right: 1px solid #dedede; border-bottom: 2px solid #74b0e8; position: relative; }
.sorted::after { content: ""; position: absolute; left: 5px; bottom: 3px; border: 4px solid transparent; border-top: 5px solid #252423; border-bottom: 0; }
td { height: 20px; padding: 1px 5px 0; text-align: right; white-space: nowrap; border-right: 1px solid #eee; }
th:first-child, td:first-child { text-align: left; padding-left: 5px; }
th:last-child, td:last-child { border-right: 0; }
tbody tr:nth-child(3n) td { height: 21px; }
tbody tr:nth-child(even) { background: #ededed; }
tbody td:last-child { border-bottom: 1px solid #dcdcdc; color: rgba(50, 40, 30, .8); }
tbody tr:last-child td { border-bottom: 2px solid #74b0e8; }
tfoot td { font-size: 12px; font-weight: 700; color: #000; border: 0; }
.corner, .grip { position: absolute; }
.grip { background: #979797; }
.corner { width: 9px; height: 9px; border: 0 solid #8f8f8f; }
.tl { left: -3px; top: -3px; border-width: 4px 0 0 4px; }
.tr { right: -3px; top: -3px; border-width: 4px 4px 0 0; }
.bl { left: -3px; bottom: -3px; border-width: 0 0 4px 4px; }
.br { right: -3px; bottom: -3px; border-width: 0 4px 4px 0; }
.top, .bottom { width: 13px; height: 4px; left: 50%; margin-left: -6px; }
.left, .right { width: 4px; height: 13px; top: 50%; margin-top: -6px; }
.top { top: -3px; } .bottom { bottom: -3px; } .left { left: -3px; } .right { right: -3px; }
.page-edge { grid-column: 1 / 4; margin-left: 3px; border-top: 2px dotted #484644; }

/* page tabs and status */
.pages { display: flex; align-items: center; height: 38px; background: var(--chrome); border-bottom: 1px solid #d8d6d4; }
.arrow { width: 20px; display: grid; place-items: center; }
.page { align-self: stretch; width: 80px; padding-top: 2px; background: #fff; border: 1px solid #c8c6c4; border-width: 0 1px 3px; border-bottom-color: var(--gold); color: #797775; font-size: 12px; }
.add { align-self: stretch; width: 41px; margin: 3px 0 0; background: var(--gold); display: grid; place-items: center; }
.status { height: 24px; padding: 0 5px; font-size: 12px; line-height: 25px; color: #484644; }

/* right-hand panes */
.pane { border-left: 1px solid #e1dfdd; overflow: hidden; }
.pane-head { display: flex; align-items: center; height: 55px; }
.pane-head h2 { font-size: 16px; line-height: 22px; font-weight: 600; color: #3b3a39; flex: 1; padding-top: 2px; }
.filters { width: 210px; background: #fff; border-left: 2px solid #c8c6c4; color: #484644; }
.filters .pane-head { padding: 0 13px 9px 11px; gap: 8px; }
.filters h2 { font-size: 15px; font-weight: 700; padding-top: 0; }
.eye { margin-right: 14px; }
.search { display: flex; align-items: center; height: 32px; margin: 0 13px 0 7px; padding-left: 10px; gap: 8px; border: 1px solid #bebbb8; border-radius: 2px; background: #fff; }
.search input { border: 0; outline: 0; width: 100%; min-width: 0; padding: 0; background: none; font-size: 12px; }
.search input::placeholder { color: #605e5c; opacity: 1; }
.filter-title { display: flex; align-items: center; justify-content: space-between; height: 43px; margin-top: 4px; padding: 9px 13px 0 7px; border-top: 2px solid #d2d0ce; }
.cards { display: grid; gap: 6px; padding: 0 9px 0 7px; }
.cards li { height: 48px; padding: 5px 8px; line-height: 18px; border: 1px solid #c8c6c4; border-radius: 2px; }
.cards span { display: block; }
.viz { width: 188px; }
.viz .pane-head, .fields .pane-head { padding: 0 12px 7px; }
.viz-grid { display: grid; grid-template-columns: repeat(6, 29px); grid-auto-rows: 25px; place-items: center; margin-left: 5px; margin-top: -1px; }
.viz-grid svg { width: 17px; height: 17px; }
.viz-grid .picked { outline: 2px solid #605e5c; outline-offset: 2px; }
.k, .k1 { fill: none; stroke: #484644; stroke-width: 1.300; }
.k1 { stroke-width: 1; }
.b { fill: #83beec; stroke: #1f77c4; }
.bl { fill: none; stroke: #1f77c4; stroke-width: 1.300; }
.viz-grid .g { fill: #c8c6c4; stroke: #605e5c; }
.w { fill: #fff; stroke: #605e5c; }
.num { font: 8px var(--ui); fill: #2b88d8; text-anchor: middle; }
.letter { font: 700 15px var(--ui); fill: #1f77c4; text-anchor: middle; }
.custom-viz { display: flex; align-items: center; gap: 10px; height: 34px; margin-top: 6px; padding-left: 10px; border-top: 1px dashed #c8c6c4; border-bottom: 1px solid #d2d0ce; }
.viz-tabs { display: flex; padding-left: 12px; height: 38px; }
.viz-tabs button { width: 42px; display: grid; place-items: center; }
.viz-tabs .on { border-bottom: 4px solid var(--gold); }
.viz h3 { font-size: 12px; font-weight: 400; margin: 6px 12px; line-height: 16px; }
.wells { display: grid; gap: 2px; margin: 0 5px; padding: 3px 2px; border: 1px dashed #a19f9d; }
.wells li { display: flex; align-items: center; height: 24px; padding: 0 4px; border: 1px solid #c8c6c4; background: #eceae8; gap: 6px; border-radius: 2px; }
.wells span { flex: 1; min-width: 0; white-space: nowrap; overflow: hidden; margin-right: -6px; }
.fields { width: 256px; }
.fields .search { margin: 0 5px 4px 4px; }
.tables { border-top: 1px solid #e1dfdd; padding-top: 8px; }
.tbl-row { display: flex; align-items: center; height: 29px; padding-left: 5px; white-space: nowrap; }
.open { font-weight: 600; }
.tbl-ico { position: relative; margin: 0 12px 0 7px; }
.badge { position: absolute; left: 7px; top: 8px; width: 12px; height: 12px; }
.field-list { padding: 4px 0 0 12px; }
.field-list li { display: grid; grid-template-columns: 21px 18px 21px 1fr; align-items: center; height: 25px; white-space: nowrap; }
.field-list input { appearance: none; width: 13px; height: 13px; margin: 0; border: 1px solid #797775; border-radius: 2px; background: #fff; display: grid; place-items: center; }
.field-list input:checked { background: var(--gold); border-color: var(--gold); }
.field-list input:checked::after { content: ""; width: 7px; height: 4px; border: solid #323130; border-width: 0 0 1px 1px; transform: rotate(-45deg); }

/* conditional formatting dialog */
.dialog { position: absolute; right: 0; bottom: -24px; top: 448px; width: 874px; padding: 26px 0 0 29px; background: #fff; border: 1px solid #c8c6c4; border-width: 1px 0 0 1px; color: #252423; z-index: 2; }
.dialog h2 { font-size: 24px; line-height: 32px; height: 29px; overflow: hidden; font-weight: 300; color: #605e5c; }
.form-grid { display: grid; grid-template-columns: 287px 287px; column-gap: 30px; row-gap: 19px; margin-top: 23px; }
.form-grid label { display: block; font-size: 16px; line-height: 20px; margin-bottom: 13px; }
.form-grid select { width: 100%; height: 30px; padding: 0 9px; }
.dialog select, .dialog input { border: 1px solid #797775; border-radius: 1px; background: #fff; color: #252423; font-size: 12px; }
.rules-head { display: flex; height: 58px; padding-top: 8px; }
.rules-head h3 { flex: 1; font-size: 12px; font-weight: 400; line-height: 24px; }
.rules-head button { display: flex; align-items: center; justify-content: center; gap: 6px; width: 184px; height: 36px; background: #eaeaea; font-size: 13px; }
.rules-head .new-rule { width: 39px; margin-left: 9px; justify-content: flex-end; padding-right: 6px; }
.rule { display: flex; align-items: center; gap: 4px; height: 39px; padding-left: 4px; }
.rule + .rule { margin-top: 1px; }
.shaded { background: #eaeaea; }
.rule span { color: #605e5c; width: 21px; padding-bottom: 2px; white-space: nowrap; }
.rule .if { width: 40px; }
.rule .op { width: 175px; height: 34px; }
.rule input { width: 63px; height: 34px; padding: 0 5px; }
.rule .unit { width: 73px; height: 34px; }
.color { display: flex; align-items: center; gap: 8px; width: 46px; height: 30px; margin: 0 0 4px 8px; padding-left: 4px; border: 1px solid #323130; background: #fff; }
.color i { width: 17px; height: 17px; border: 1px solid #323130; }
.color::after { content: ""; border: 4px solid transparent; border-top: 5px solid #979593; border-bottom: 0; }

/* taskbar */
.taskbar { display: flex; height: 42px; background: linear-gradient(90deg, #3c3a33, #403e38 50%, #484848 58%); color: #fff; z-index: 3; }
.start { width: 51px; display: grid; place-items: center; }
.task-search { display: flex; align-items: center; gap: 10px; width: 357px; padding-left: 12px; background: #f2f2f2; }
.task-search input { border: 0; outline: 0; flex: 1; padding: 2px 0 0; background: none; font-size: 14px; }
.task-search input::placeholder { color: #484644; opacity: 1; }
.apps { display: flex; padding-left: 1px; }
.apps button { width: 51px; display: grid; place-items: center; }
.apps svg { width: 26px; height: 26px; }
.run { box-shadow: inset 5px 0 #3f3d37, inset -5px 0 #3f3d37, inset 0 -3px #76b9ed; }
.front { background: #67655f; box-shadow: inset 0 -3px #76b9ed; }
.ps { font: 700 11px var(--ui); fill: #cfe0ff; text-anchor: middle; }
.tray { display: flex; align-items: center; margin-left: auto; gap: 9px; padding-right: 25px; }
.clock { display: flex; flex-direction: column; align-items: center; width: 64px; font-size: 12px; line-height: 18px; margin: 0 6px 0 2px; }
.notif { position: relative; }
.notif b { position: absolute; left: 8px; top: 6px; width: 16px; height: 16px; border-radius: 50%; background: #605e5c; font-size: 11px; line-height: 16px; text-align: center; }
```
